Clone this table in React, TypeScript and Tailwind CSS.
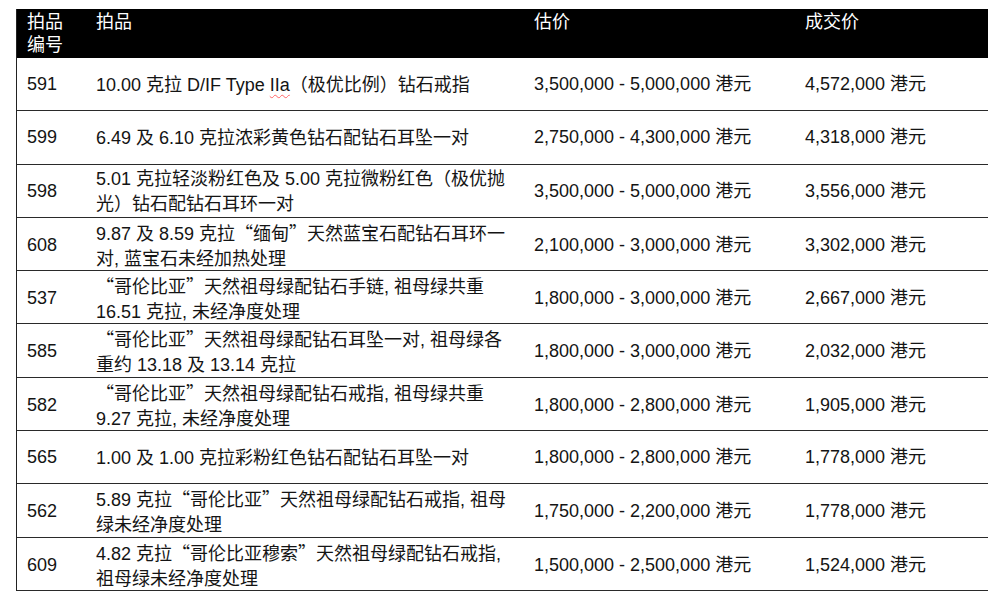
import { ReactNode } from "react";

type Lot = {
  no: string;
  lines: ReactNode[];
  estimate: string;
  price: string;
};

// full-width CJK quote marks, as in the printed table
const Q = ({ c }: { c: string }) => (
  <span className="font-['Noto_Sans_CJK_SC',sans-serif]">{c}</span>
);

const lots: Lot[] = [
  {
    no: "591",
    lines: [
      <>
        10.00 克拉 D/IF Type{" "}
        <span className="underline decoration-wavy decoration-red-400 decoration-1 underline-offset-[3px]">IIa</span>
        （极优比例）钻石戒指
      </>,
    ],
    estimate: "3,500,000 - 5,000,000",
    price: "4,572,000",
  },
  {
    no: "599",
    lines: ["6.49 及 6.10 克拉浓彩黄色钻石配钻石耳坠一对"],
    estimate: "2,750,000 - 4,300,000",
    price: "4,318,000",
  },
  {
    no: "598",
    lines: ["5.01 克拉轻淡粉红色及 5.00 克拉微粉红色（极优抛", "光）钻石配钻石耳环一对"],
    estimate: "3,500,000 - 5,000,000",
    price: "3,556,000",
  },
  {
    no: "608",
    lines: [
      <>
        9.87 及 8.59 克拉<Q c="“" />缅甸<Q c="”" />天然蓝宝石配钻石耳环一
      </>,
      "对, 蓝宝石未经加热处理",
    ],
    estimate: "2,100,000 - 3,000,000",
    price: "3,302,000",
  },
  {
    no: "537",
    lines: [
      <>
        <Q c="“" />哥伦比亚<Q c="”" />天然祖母绿配钻石手链, 祖母绿共重
      </>,
      "16.51 克拉, 未经净度处理",
    ],
    estimate: "1,800,000 - 3,000,000",
    price: "2,667,000",
  },
  {
    no: "585",
    lines: [
      <>
        <Q c="“" />哥伦比亚<Q c="”" />天然祖母绿配钻石耳坠一对, 祖母绿各
      </>,
      "重约 13.18 及 13.14 克拉",
    ],
    estimate: "1,800,000 - 3,000,000",
    price: "2,032,000",
  },
  {
    no: "582",
    lines: [
      <>
        <Q c="“" />哥伦比亚<Q c="”" />天然祖母绿配钻石戒指, 祖母绿共重
      </>,
      "9.27 克拉, 未经净度处理",
    ],
    estimate: "1,800,000 - 2,800,000",
    price: "1,905,000",
  },
  {
    no: "565",
    lines: ["1.00 及 1.00 克拉彩粉红色钻石配钻石耳坠一对"],
    estimate: "1,800,000 - 2,800,000",
    price: "1,778,000",
  },
  {
    no: "562",
    lines: [
      <>
        5.89 克拉<Q c="“" />哥伦比亚<Q c="”" />天然祖母绿配钻石戒指, 祖母
      </>,
      "绿未经净度处理",
    ],
    estimate: "1,750,000 - 2,200,000",
    price: "1,778,000",
  },
  {
    no: "609",
    lines: [
      <>
        4.82 克拉<Q c="“" />哥伦比亚穆索<Q c="”" />天然祖母绿配钻石戒指,
      </>,
      "祖母绿未经净度处理",
    ],
    estimate: "1,500,000 - 2,500,000",
    price: "1,524,000",
  },
];

const cols = "grid grid-cols-[69px_438px_271px_194px]";

export default function App() {
  return (
    <div className="w-[1000px] h-[600px] bg-white pt-[9px] pl-[16px] text-[18px] text-[#141414] font-['Liberation_Sans','Noto_Sans_CJK_SC',sans-serif]">
      <div className="w-[972px] border-l border-[#222]">
        {/* HEADER */}
        <div className={`${cols} h-[49px] bg-black text-white leading-[23px] pt-[2px]`}>
          <div className="pl-[10px]">
            拍品
            <br />
            编号
          </div>
          <div className="pl-[10px]">拍品</div>
          <div className="pl-[10px]">估价</div>
          <div className="pl-[10px]">成交价</div>
        </div>

        {/* ROWS */}
        {lots.map((lot) => (
          <div
            key={lot.no}
            className={`${cols} h-[53.3px] items-center border-b border-[#2a2a2a] leading-[24px]`}
          >
            <div className="pl-[10px]">{lot.no}</div>
            <div className="pl-[10px] pt-[2px] leading-[25px]">
              {lot.lines.map((line, i) => (
                <div key={i} className="whitespace-nowrap">
                  {line}
                </div>
              ))}
            </div>
            <div className="pl-[10px] whitespace-nowrap">{lot.estimate} 港元</div>
            <div className="pl-[10px] whitespace-nowrap">{lot.price} 港元</div>
          </div>
        ))}
      </div>
    </div>
  );
}
